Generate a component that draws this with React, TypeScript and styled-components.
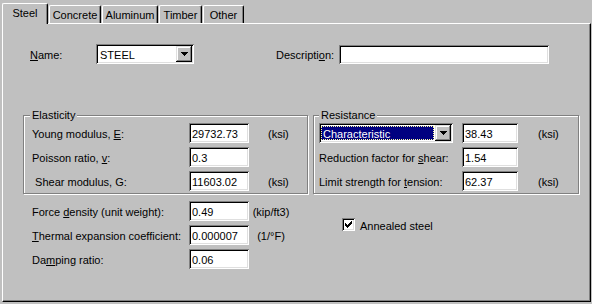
import React from "react";
import styled, { createGlobalStyle } from "styled-components";

const GlobalStyle = createGlobalStyle`
  html, body {
    margin: 0;
    padding: 0;
    background: #c0c0c0;
  }
  body {
    font-family: "Liberation Sans", Arial, sans-serif;
    font-size: 11px;
    color: #000;
  }
`;

const sunken = `
  box-shadow: inset 1px 1px #808080, inset -1px -1px #fff, inset 2px 2px #000, inset -2px -2px #dfdfdf;
`;

const raised = `
  box-shadow: inset -1px -1px #000, inset 1px 1px #dfdfdf, inset -2px -2px #808080, inset 2px 2px #fff;
`;

const Window = styled.div`
  width: 592px;
  height: 304px;
  box-sizing: border-box;
  padding: 3px 1px 2px 2px;
  display: flex;
  flex-direction: column;
  background: #c0c0c0;
`;

const TabStrip = styled.div`
  display: flex;
  align-items: flex-end;
  height: 20px;
  flex: none;
`;

const Tab = styled.div<{ $active?: boolean; $w: number }>`
  position: relative;
  z-index: ${(p) => (p.$active ? 2 : 0)};
  box-sizing: border-box;
  width: ${(p) => p.$w}px;
  height: ${(p) => (p.$active ? 21 : 18)}px;
  margin-left: ${(p) => (p.$active ? 0 : 1)}px;
  margin-bottom: ${(p) => (p.$active ? -1 : 0)}px;
  padding-bottom: ${(p) => (p.$active ? 3 : 0)}px;
  border-left: 1px solid #fff;
  border-top: 1px solid #fff;
  border-right: 1px solid #000;
  border-radius: 2px 2px 0 0;
  box-shadow: inset -1px 0 #808080;
  background: #c0c0c0;
  display: flex;
  align-items: center;
  justify-content: center;
  white-space: nowrap;
`;

const Panel = styled.div`
  flex: 1;
  box-sizing: border-box;
  border-top: 1px solid #fff;
  border-left: 1px solid #fff;
  border-right: 1px solid #000;
  border-bottom: 1px solid #000;
  box-shadow: inset -1px -1px #808080;
`;

const TopRow = styled.div`
  display: flex;
  align-items: center;
  height: 20px;
  margin: 20px 0 0 27px;
`;

const Label = styled.label<{ $w?: number; $ml?: number }>`
  flex: none;
  width: ${(p) => (p.$w ? `${p.$w}px` : "auto")};
  margin-left: ${(p) => p.$ml ?? 0}px;
  padding-top: 2px;
  white-space: nowrap;
`;

const Key = styled.u`
  text-decoration: underline;
  text-underline-offset: 1px;
`;

const TextBox = styled.input<{ $w: number; $h?: number }>`
  width: ${(p) => p.$w}px;
  height: ${(p) => p.$h ?? 20}px;
  box-sizing: border-box;
  border: none;
  outline: none;
  margin: 0;
  padding: 2px 3px 0;
  background: #fff;
  font: inherit;
  color: #000;
  ${sunken}
`;

const Combo = styled.div<{ $w: number }>`
  flex: none;
  display: flex;
  width: ${(p) => p.$w}px;
  height: 20px;
  box-sizing: border-box;
  padding: 2px;
  background: #fff;
  ${sunken}
`;

const ComboText = styled.div<{ $selected?: boolean }>`
  flex: 1;
  display: flex;
  align-items: center;
  margin: 1px 1px 1px 0;
  padding: 1px 0 0 2px;
  background: ${(p) => (p.$selected ? "#000080" : "transparent")};
  color: ${(p) => (p.$selected ? "#fff" : "#000")};
  outline: ${(p) => (p.$selected ? "1px dotted #ffffa0" : "none")};
  outline-offset: -1px;
`;

const DropButton = styled.div`
  flex: none;
  width: 16px;
  height: 16px;
  background: #c0c0c0;
  display: flex;
  align-items: center;
  justify-content: center;
  ${raised}
`;

const Groups = styled.div`
  display: flex;
  gap: 5px;
  margin: 45px 0 0 20px;
`;

const Group = styled.fieldset<{ $w: number }>`
  width: ${(p) => p.$w}px;
  box-sizing: border-box;
  min-width: 0;
  margin: 0;
  padding: 1px 0 2px 0;
  border: 1px solid #808080;
  box-shadow: inset 1px 1px #fff, 1px 1px #fff;
`;

const Legend = styled.legend<{ $ml: number }>`
  margin-left: ${(p) => p.$ml}px;
  padding: 0 2px;
  line-height: 13px;
  background: #c0c0c0;
`;

const FieldList = styled.div<{ $pl: number }>`
  display: flex;
  flex-direction: column;
  gap: 4px;
  padding-left: ${(p) => p.$pl}px;
`;

const FieldRow = styled.div<{ $cols: string }>`
  display: grid;
  grid-template-columns: ${(p) => p.$cols};
  align-items: center;
  height: 20px;
`;

const Unit = styled.span<{ $ml?: number; $center?: boolean }>`
  margin-left: ${(p) => p.$ml ?? 0}px;
  text-align: ${(p) => (p.$center ? "center" : "left")};
  white-space: nowrap;
  padding-top: 1px;
`;

const Bottom = styled.div`
  display: flex;
  margin: 7px 0 0 29px;
`;

const CheckRow = styled.div`
  display: flex;
  align-items: center;
  margin: 17px 0 0 49px;
  height: 13px;
`;

const CheckBox = styled.div`
  width: 13px;
  height: 13px;
  box-sizing: border-box;
  background: #fff;
  display: flex;
  align-items: center;
  justify-content: center;
  ${sunken}
`;

const CheckText = styled.span`
  margin-left: 5px;
  padding-top: 2px;
`;

const Arrow = () => (
  <svg width="7" height="4" viewBox="0 0 7 4" shapeRendering="crispEdges">
    <rect x="0" y="0" width="7" height="1" fill="#000" />
    <rect x="1" y="1" width="5" height="1" fill="#000" />
    <rect x="2" y="2" width="3" height="1" fill="#000" />
    <rect x="3" y="3" width="1" height="1" fill="#000" />
  </svg>
);

const checkPixels = [
  [6, 0, 1],
  [5, 1, 2],
  [0, 2, 1],
  [4, 2, 3],
  [0, 3, 2],
  [3, 3, 3],
  [0, 4, 5],
  [1, 5, 3],
  [2, 6, 1],
];

const Check = () => (
  <svg width="7" height="7" viewBox="0 0 7 7" shapeRendering="crispEdges">
    {checkPixels.map(([x, y, w]) => (
      <rect key={`${x}-${y}`} x={x} y={y} width={w} height="1" fill="#000" />
    ))}
  </svg>
);

const tabs = [
  { name: "Steel", w: 46 },
  { name: "Concrete", w: 52 },
  { name: "Aluminum", w: 56 },
  { name: "Timber", w: 43 },
  { name: "Other", w: 41 },
];

const elasticCols = "157px 60px auto";
const resistCols = "143px 56px auto";
const bottomCols = "157px 60px 44px";

export default function App() {
  return (
    <>
      <GlobalStyle />
      <Window>
        <TabStrip>
          {tabs.map((t, i) => (
            <Tab key={t.name} $w={t.w} $active={i === 0}>
              {t.name}
            </Tab>
          ))}
        </TabStrip>
        <Panel>
          <TopRow>
            <Label $w={66}>
              <Key>N</Key>ame:
            </Label>
            <Combo $w={98}>
              <ComboText>STEEL</ComboText>
              <DropButton>
                <Arrow />
              </DropButton>
            </Combo>
            <Label $w={63} $ml={82}>
              Descripti<Key>o</Key>n:
            </Label>
            <TextBox $w={210} $h={19} readOnly defaultValue="" />
          </TopRow>

          <Groups>
            <Group $w={285}>
              <Legend $ml={6}>Elasticity</Legend>
              <FieldList $pl={8}>
                <FieldRow $cols={elasticCols}>
                  <Label>
                    Young modulus, <Key>E</Key>:
                  </Label>
                  <TextBox $w={60} readOnly defaultValue="29732.73" />
                  <Unit $ml={19}>(ksi)</Unit>
                </FieldRow>
                <FieldRow $cols={elasticCols}>
                  <Label>
                    Poisson ratio, <Key>v</Key>:
                  </Label>
                  <TextBox $w={60} readOnly defaultValue="0.3" />
                  <span />
                </FieldRow>
                <FieldRow $cols={elasticCols}>
                  <Label>&nbsp;Shear modulus, G:</Label>
                  <TextBox $w={60} readOnly defaultValue="11603.02" />
                  <Unit $ml={19}>(ksi)</Unit>
                </FieldRow>
              </FieldList>
            </Group>

            <Group $w={266}>
              <Legend $ml={5}>Resistance</Legend>
              <FieldList $pl={5}>
                <FieldRow $cols={resistCols}>
                  <Combo $w={134}>
                    <ComboText $selected>Characteristic</ComboText>
                    <DropButton>
                      <Arrow />
                    </DropButton>
                  </Combo>
                  <TextBox $w={56} readOnly defaultValue="38.43" />
                  <Unit $ml={20}>(ksi)</Unit>
                </FieldRow>
                <FieldRow $cols={resistCols}>
                  <Label>
                    Reduction factor for <Key>s</Key>hear:
                  </Label>
                  <TextBox $w={56} readOnly defaultValue="1.54" />
                  <span />
                </FieldRow>
                <FieldRow $cols={resistCols}>
                  <Label>
                    Limit strength for <Key>t</Key>ension:
                  </Label>
                  <TextBox $w={56} readOnly defaultValue="62.37" />
                  <Unit $ml={20}>(ksi)</Unit>
                </FieldRow>
              </FieldList>
            </Group>
          </Groups>

          <Bottom>
            <FieldList $pl={0}>
              <FieldRow $cols={bottomCols}>
                <Label>
                  Force <Key>d</Key>ensity (unit weight):
                </Label>
                <TextBox $w={60} readOnly defaultValue="0.49" />
                <Unit $center>(kip/ft3)</Unit>
              </FieldRow>
              <FieldRow $cols={bottomCols}>
                <Label>
                  <Key>T</Key>hermal expansion coefficient:
                </Label>
                <TextBox $w={60} readOnly defaultValue="0.000007" />
                <Unit $center>(1/°F)</Unit>
              </FieldRow>
              <FieldRow $cols={bottomCols}>
                <Label>
                  Da<Key>m</Key>ping ratio:
                </Label>
                <TextBox $w={60} readOnly defaultValue="0.06" />
                <span />
              </FieldRow>
            </FieldList>
            <CheckRow>
              <CheckBox>
                <Check />
              </CheckBox>
              <CheckText>Annealed steel</CheckText>
            </CheckRow>
          </Bottom>
        </Panel>
      </Window>
    </>
  );
}
